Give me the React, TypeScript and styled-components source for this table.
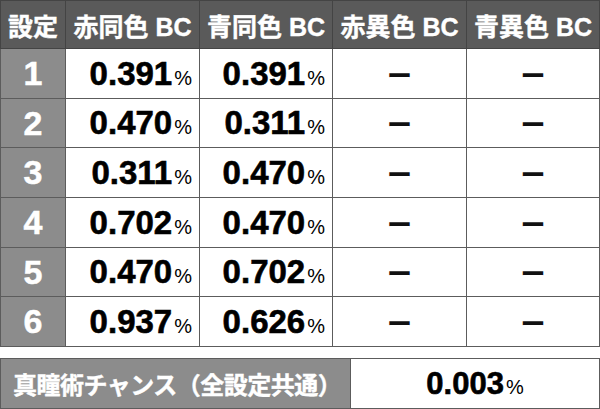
import React from "react";
import styled, { createGlobalStyle } from "styled-components";

const rows = [
  { setting: "1", redSame: "0.391", blueSame: "0.391" },
  { setting: "2", redSame: "0.470", blueSame: "0.311" },
  { setting: "3", redSame: "0.311", blueSame: "0.470" },
  { setting: "4", redSame: "0.702", blueSame: "0.470" },
  { setting: "5", redSame: "0.470", blueSame: "0.702" },
  { setting: "6", redSame: "0.937", blueSame: "0.626" },
];

const heights = [50, 49, 50, 50, 49, 50];

const Rate: React.FC<{ value: string }> = ({ value }) => (
  <>
    {value}
    <Percent>%</Percent>
  </>
);

const App: React.FC = () => {
  return (
    <>
      <GlobalStyle />
      <Page>
        <Table>
          <colgroup>
            <col style={{ width: 65 }} />
            <col style={{ width: 134 }} />
            <col style={{ width: 133 }} />
            <col style={{ width: 134 }} />
            <col style={{ width: 133 }} />
          </colgroup>
          <thead>
            <tr>
              <HeadCell>設定</HeadCell>
              <HeadCell>赤同色 BC</HeadCell>
              <HeadCell>青同色 BC</HeadCell>
              <HeadCell>赤異色 BC</HeadCell>
              <HeadCell>青異色 BC</HeadCell>
            </tr>
          </thead>
          <tbody>
            {rows.map((r, i) => (
              <tr key={r.setting} style={{ height: heights[i] }}>
                <SettingCell>{r.setting}</SettingCell>
                <RateCell>
                  <Rate value={r.redSame} />
                </RateCell>
                <RateCell>
                  <Rate value={r.blueSame} />
                </RateCell>
                <DashCell>ー</DashCell>
                <DashCell>ー</DashCell>
              </tr>
            ))}
          </tbody>
        </Table>

        <ChanceTable>
          <colgroup>
            <col style={{ width: 350 }} />
            <col style={{ width: 249 }} />
          </colgroup>
          <tbody>
            <tr>
              <ChanceLabel>真瞳術チャンス（全設定共通）</ChanceLabel>
              <ChanceValue>
                <Rate value="0.003" />
              </ChanceValue>
            </tr>
          </tbody>
        </ChanceTable>
      </Page>
    </>
  );
};

const GlobalStyle = createGlobalStyle`
  html, body {
    margin: 0;
    padding: 0;
    background: #ffffff;
  }
  body, table, th, td {
    font-family: "Liberation Sans", "Noto Sans CJK JP", sans-serif;
  }
`;

const Page = styled.div`
  width: 600px;
  height: 409px;
  display: flex;
  flex-direction: column;
  gap: 11px;
  overflow: hidden;
`;

const Table = styled.table`
  width: 599px;
  table-layout: fixed;
  border-collapse: collapse;
  font-family: "Liberation Sans", "Noto Sans CJK JP", sans-serif;

  td,
  th {
    border: 1px solid #5c5c5c;
    padding: 0;
  }
`;

const HeadCell = styled.th`
  height: 47px;
  background: #5a5a5a;
  color: #fff;
  font-size: 25px;
  font-weight: bold;
  text-align: center;
  white-space: nowrap;
  -webkit-text-stroke: 0.4px #fff;
  border-color: #444 !important;
`;

const SettingCell = styled.td`
  background: #8c8c8c;
  color: #fff;
  font-size: 34px;
  font-weight: bold;
  text-align: center;
  -webkit-text-stroke: 0.5px #fff;
`;

const RateCell = styled.td`
  color: #000;
  font-size: 33px;
  font-weight: bold;
  text-align: right;
  padding-right: 7px !important;
  white-space: nowrap;
  -webkit-text-stroke: 0.6px #000;
`;

const Percent = styled.span`
  font-size: 20px;
  font-weight: normal;
  margin-left: 2px;
  -webkit-text-stroke: 0;
`;

const DashCell = styled.td`
  color: #111;
  font-family: "Noto Sans CJK JP", sans-serif !important;
  font-size: 25px;
  font-weight: bold;
  text-align: center;
`;

const ChanceTable = styled(Table)`
  td {
    height: 49px;
  }
`;

const ChanceLabel = styled.td`
  background: #8c8c8c;
  color: #fff;
  font-size: 24px;
  font-weight: bold;
  padding-left: 12px !important;
  white-space: nowrap;
  letter-spacing: -0.5px;
  -webkit-text-stroke: 0.4px #fff;
`;

const ChanceValue = styled.td`
  color: #000;
  font-size: 31px;
  font-weight: bold;
  text-align: center;
  -webkit-text-stroke: 0.6px #000;
`;

export default App;
